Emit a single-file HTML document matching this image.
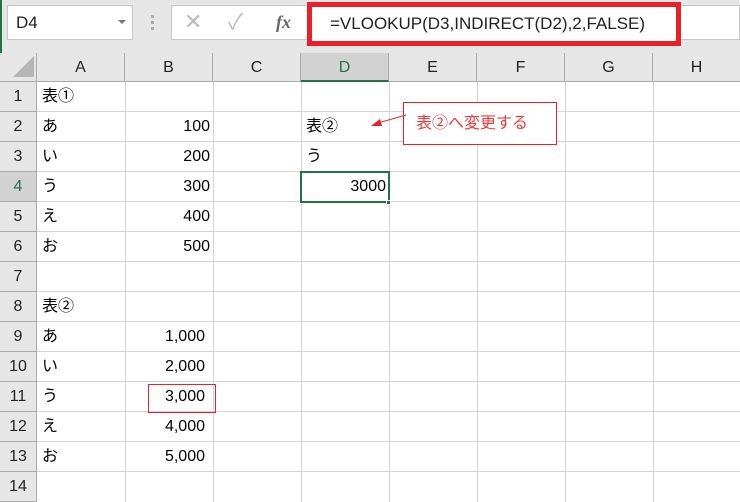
<!DOCTYPE html>
<html><head><meta charset="utf-8"><style>
*{margin:0;padding:0;box-sizing:border-box}
body{width:740px;height:501px;overflow:hidden;background:#fff;position:relative;font-family:"Liberation Sans","Noto Sans CJK JP",sans-serif;color:#000}
.a{position:absolute}
.top{left:0;top:0;width:740px;height:53px;background:#e6e6e6}
.ch{top:53px;height:29px;background:#e6e6e6;border-right:1px solid #ababab;border-bottom:1px solid #ababab;text-align:center;line-height:29px;font-size:16px;color:#222}
.rh{left:0;width:37px;height:30px;background:#e6e6e6;border-right:1px solid #ababab;border-bottom:1px solid #ababab;text-align:center;line-height:30px;font-size:16px;color:#222}
.vl{top:82px;width:1px;height:420px;background:#d4d4d4}
.hl{left:37px;width:703px;height:1px;background:#d4d4d4}
.t{font-size:16px;line-height:30px;height:30px}
.r{text-align:right}
</style></head><body>
<div class="a top"></div>
<div class="a" style="left:0;top:0;width:2px;height:501px;background:#217346"></div>
<div class="a" style="left:7px;top:5px;width:126px;height:35px;background:#fff;border:1px solid #c6c6c6;font-size:17px;line-height:33px;padding-left:8px;color:#222">D4</div>
<div class="a" style="left:118px;top:20px;border-left:4px solid transparent;border-right:4px solid transparent;border-top:4px solid #777"></div>
<div class="a" style="left:151px;top:15px;width:3px;height:3px;background:#aaa;box-shadow:0 6px 0 #aaa,0 12px 0 #aaa"></div>
<div class="a" style="left:171px;top:5px;width:569px;height:35px;background:#fff;border:1px solid #c6c6c6"></div>
<div class="a" style="left:184px;top:6px;font-size:22px;color:#bbb;line-height:32px">✕</div>
<div class="a" style="left:228px;top:6px;font-size:22px;color:#bbb;line-height:32px">✓</div>
<div class="a" style="left:276px;top:6px;font-size:18px;color:#666;line-height:32px;font-family:'Liberation Serif',serif;font-style:italic;font-weight:bold">fx</div>
<div class="a" style="left:307px;top:2px;width:374px;height:44px;border:5px solid #e8202a;background:#fff;font-size:17px;line-height:34px;padding-left:18px;color:#222">=VLOOKUP(D3,INDIRECT(D2),2,FALSE)</div>

<div class="a" style="left:0;top:53px;width:37px;height:29px;background:#e6e6e6;border-right:1px solid #ababab;border-bottom:1px solid #ababab"></div>
<div class="a" style="left:13px;top:56px;width:0;height:0;border-left:21px solid transparent;border-bottom:21px solid #b5b5b5"></div>
<div class="a ch" style="left:37px;width:88px">A</div>
<div class="a ch" style="left:125px;width:88px">B</div>
<div class="a ch" style="left:213px;width:88px">C</div>
<div class="a ch" style="left:301px;width:88px;background:#d2d2d2;border-bottom:2px solid #217346;color:#217346">D</div>
<div class="a ch" style="left:389px;width:88px">E</div>
<div class="a ch" style="left:477px;width:88px">F</div>
<div class="a ch" style="left:565px;width:88px">G</div>
<div class="a ch" style="left:653px;width:88px">H</div>

<div class="a rh" style="top:82px">1</div><div class="a rh" style="top:112px">2</div><div class="a rh" style="top:142px">3</div>
<div class="a rh" style="top:172px;background:#d2d2d2;color:#217346">4</div><div class="a rh" style="top:202px">5</div><div class="a rh" style="top:232px">6</div>
<div class="a rh" style="top:262px">7</div><div class="a rh" style="top:292px">8</div><div class="a rh" style="top:322px">9</div>
<div class="a rh" style="top:352px">10</div><div class="a rh" style="top:382px">11</div><div class="a rh" style="top:412px">12</div>
<div class="a rh" style="top:442px">13</div><div class="a rh" style="top:472px">14</div>

<div class="a vl" style="left:125px"></div><div class="a vl" style="left:213px"></div><div class="a vl" style="left:301px"></div>
<div class="a vl" style="left:389px"></div><div class="a vl" style="left:477px"></div><div class="a vl" style="left:565px"></div><div class="a vl" style="left:653px"></div>
<div class="a hl" style="top:111px"></div><div class="a hl" style="top:141px"></div><div class="a hl" style="top:171px"></div><div class="a hl" style="top:201px"></div>
<div class="a hl" style="top:231px"></div><div class="a hl" style="top:261px"></div><div class="a hl" style="top:291px"></div><div class="a hl" style="top:321px"></div>
<div class="a hl" style="top:351px"></div><div class="a hl" style="top:381px"></div><div class="a hl" style="top:411px"></div><div class="a hl" style="top:441px"></div><div class="a hl" style="top:471px"></div>

<div class="a t" style="left:42px;top:82px">表①</div>
<div class="a t" style="left:42px;top:112px">あ</div><div class="a t r" style="left:125px;width:85px;top:112px">100</div>
<div class="a t" style="left:42px;top:142px">い</div><div class="a t r" style="left:125px;width:85px;top:142px">200</div>
<div class="a t" style="left:42px;top:172px">う</div><div class="a t r" style="left:125px;width:85px;top:172px">300</div>
<div class="a t" style="left:42px;top:202px">え</div><div class="a t r" style="left:125px;width:85px;top:202px">400</div>
<div class="a t" style="left:42px;top:232px">お</div><div class="a t r" style="left:125px;width:85px;top:232px">500</div>
<div class="a t" style="left:42px;top:292px">表②</div>
<div class="a t" style="left:42px;top:322px">あ</div><div class="a t r" style="left:125px;width:80px;top:322px">1,000</div>
<div class="a t" style="left:42px;top:352px">い</div><div class="a t r" style="left:125px;width:80px;top:352px">2,000</div>
<div class="a t" style="left:42px;top:382px">う</div><div class="a t r" style="left:125px;width:80px;top:382px">3,000</div>
<div class="a t" style="left:42px;top:412px">え</div><div class="a t r" style="left:125px;width:80px;top:412px">4,000</div>
<div class="a t" style="left:42px;top:442px">お</div><div class="a t r" style="left:125px;width:80px;top:442px">5,000</div>
<div class="a" style="left:148px;top:384px;width:68px;height:29px;border:1px solid #e8202a"></div>

<div class="a t" style="left:306px;top:112px">表②</div>
<div class="a t" style="left:306px;top:142px">う</div>
<div class="a" style="left:300px;top:171px;width:90px;height:32px;border:2px solid #217346"></div>
<div class="a t r" style="left:301px;width:85px;top:172px">3000</div>
<div class="a" style="left:386px;top:200px;width:5px;height:5px;background:#217346;border:1px solid #fff"></div>

<div class="a" style="left:403px;top:102px;width:154px;height:43px;border:1px solid #e8202a;background:#fff;color:#f03a3a;font-size:16px;line-height:41px;padding-left:12px">表②へ変更する</div>
<svg class="a" style="left:368px;top:112px" width="40" height="20"><line x1="38" y1="3" x2="10" y2="11" stroke="#e8202a" stroke-width="1"/><polygon points="3,14 12,7 14,14" fill="#e8202a"/></svg>
</body></html>
